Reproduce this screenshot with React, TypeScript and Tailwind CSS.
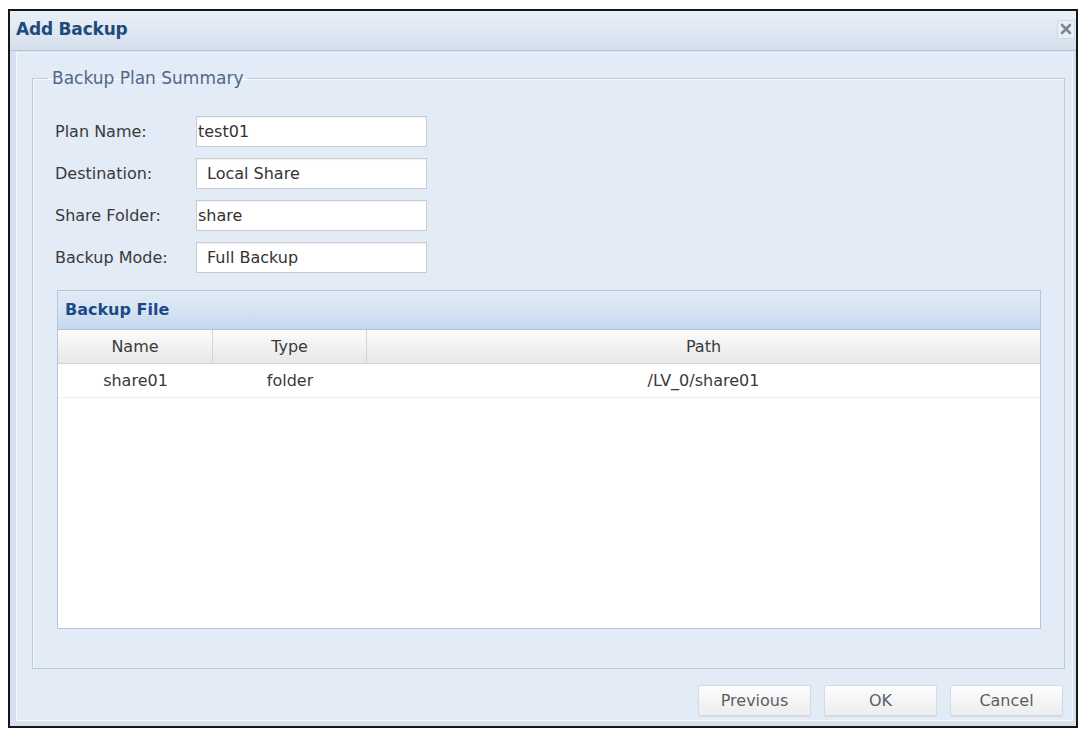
type Field = {
    label: string;
    value: string;
    pad: string;
};

type BackupFile = {
    name: string;
    type: string;
    path: string;
};

const fields: Field[] = [
    { label: 'Plan Name:', value: 'test01', pad: 'pl-[1px]' },
    { label: 'Destination:', value: 'Local Share', pad: 'pl-[10px]' },
    { label: 'Share Folder:', value: 'share', pad: 'pl-[1px]' },
    { label: 'Backup Mode:', value: 'Full Backup', pad: 'pl-[10px]' },
];

const files: BackupFile[] = [{ name: 'share01', type: 'folder', path: '/LV_0/share01' }];

function DialogButton({ label }: { label: string }) {
    return (
        <button className="w-[113px] h-[31px] rounded-[2px] border border-[#d6dbe1] bg-gradient-to-b from-[#fdfdfd] to-[#ebedf0] text-[16px] text-[#5e5e5e] shadow-[0_1px_1px_rgba(0,0,0,0.08)]">
            {label}
        </button>
    );
}

export default function App() {
    return (
        <div className="w-[1084px] h-[731px] bg-white pt-[9px] pl-[8px] font-['DejaVu_Sans',sans-serif] text-[#363636]">
            <div className="w-[1070px] h-[719px] border-2 border-[#161616] flex flex-col bg-[#d6e1ef]">
                {/* title bar */}
                <div className="h-[40px] shrink-0 flex items-center justify-between pl-[6px] border-b border-[#b2c5db] bg-gradient-to-b from-[#eaf0f7] to-[#d4dfed]">
                    <span className="text-[17px] font-bold text-[#1f4a7c] tracking-[-0.2px] -mt-[2px]">Add Backup</span>
                    <button className="w-[18px] h-[19px] mr-[1px] -mt-[3px] flex items-center justify-center bg-[#e9eff7] border border-[#cdd8e4]">
                        <svg width="12" height="12" viewBox="0 0 12 12">
                            <path d="M2 2 L10 10 M10 2 L2 10" stroke="#7a8898" strokeWidth="2.6" strokeLinecap="round" />
                        </svg>
                    </button>
                </div>

                {/* body */}
                <div className="flex-1 flex flex-col mt-[1px] ml-[6px] mr-[3px] mb-[5px] border border-[#f3f7fb] bg-[#e3ebf6]">
                    <fieldset className="h-[601px] mt-[15px] ml-[15px] mr-[7px] border border-[#bccbdc] shadow-[inset_1px_1px_0_#f7fafd]">
                        <legend className="ml-[15px] px-[4px] h-[20px] leading-[20px] text-[17px] text-[#4f6888]">
                            Backup Plan Summary
                        </legend>

                        <div className="mt-[28px] pl-[22px] flex flex-col gap-[11px]">
                            {fields.map((f) => (
                                <div key={f.label} className="flex items-center h-[31px]">
                                    <span className="w-[141px] text-[16px] text-[#3a3a3a]">{f.label}</span>
                                    <div
                                        className={`w-[231px] h-[31px] flex items-center bg-white border border-[#c8ccd1] shadow-[inset_0_1px_1px_rgba(0,0,0,0.06)] text-[16px] text-[#333] ${f.pad}`}
                                    >
                                        {f.value}
                                    </div>
                                </div>
                            ))}
                        </div>

                        {/* backup file grid */}
                        <div className="mt-[17px] ml-[24px] w-[984px] h-[339px] flex flex-col border border-[#b2c6dd] bg-white">
                            <div className="h-[39px] shrink-0 flex items-center pl-[7px] border-b border-[#a9c1de] bg-gradient-to-b from-[#e1ebf6] via-[#d6e4f3] to-[#c3d7ef]">
                                <span className="text-[16px] font-bold text-[#1b4a88]">Backup File</span>
                            </div>
                            <div className="h-[34px] shrink-0 flex text-[16px] text-[#3a3a3a] border-b border-[#d2d2d2] bg-gradient-to-b from-[#fbfbfb] to-[#e8e8e8]">
                                <div className="w-[155px] flex items-center justify-center border-r border-[#d4d4d4]">Name</div>
                                <div className="w-[154px] flex items-center justify-center border-r border-[#d4d4d4]">Type</div>
                                <div className="flex-1 flex items-center justify-center">Path</div>
                            </div>
                            {files.map((file) => (
                                <div key={file.path} className="h-[34px] shrink-0 flex text-[16px] text-[#3a3a3a] border-b border-[#eeeeee]">
                                    <div className="w-[155px] flex items-center justify-center">{file.name}</div>
                                    <div className="w-[154px] flex items-center justify-center">{file.type}</div>
                                    <div className="flex-1 flex items-center justify-center">{file.path}</div>
                                </div>
                            ))}
                        </div>
                    </fieldset>

                    <div className="mt-[16px] mr-[9px] flex justify-end gap-[13px]">
                        <DialogButton label="Previous" />
                        <DialogButton label="OK" />
                        <DialogButton label="Cancel" />
                    </div>
                </div>
            </div>
        </div>
    );
}
